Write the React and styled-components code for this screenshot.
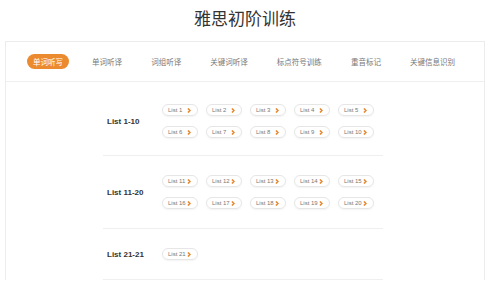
import React from 'react'
import styled, { createGlobalStyle } from 'styled-components'

const GlobalStyle = createGlobalStyle`
  body {
    margin: 0;
    background: #fff;
    font-family: "Liberation Sans", "Noto Sans CJK SC", Arial, sans-serif;
  }
`

const Page = styled.div`
  width: 480px;
  margin-left: 5px;
`

const Title = styled.h1`
  margin: 0 0 5px;
  height: 36px;
  line-height: 36px;
  text-align: center;
  font-size: 17px;
  font-weight: 400;
  color: #333;
  font-family: "Noto Sans CJK SC", sans-serif;
`

const Card = styled.div`
  border: 1px solid #ececec;
  border-bottom: none;
  background: #fff;
`

const TabBar = styled.div`
  height: 39px;
  display: flex;
  align-items: center;
  justify-content: space-between;
  padding: 0 23px 0 21px;
  border-bottom: 1px solid #efefef;
`

const Tab = styled.div`
  height: 15px;
  line-height: 15px;
  padding: 0 6px;
  border-radius: 8px;
  font-size: 7.5px;
  font-family: "Noto Sans CJK SC", sans-serif;
  color: ${props => props.active ? '#fff' : '#777'};
  background: ${props => props.active ? '#ec8a2f' : 'transparent'};
  white-space: nowrap;
`

const Content = styled.div`
  width: 280px;
  margin-left: 97px;
`

const Section = styled.div`
  display: flex;
  align-items: center;
  padding: ${props => props.first ? '22px 0 17px' : '19px 0'};
  border-bottom: 1px solid #efefef;
`

const Label = styled.div`
  width: 55px;
  padding-left: 4px;
  font-size: 8px;
  font-weight: 700;
  color: #333;
`

const Buttons = styled.div`
  display: grid;
  grid-template-columns: repeat(5, 36px);
  column-gap: 8px;
  row-gap: 10px;
`

const ListButton = styled.div`
  box-sizing: border-box;
  width: 36px;
  height: 12px;
  display: flex;
  align-items: center;
  justify-content: space-between;
  padding: 0 6px 0 5px;
  border: 1px solid #e6e6e6;
  border-radius: 7px;
  box-shadow: 0 1px 2px rgba(0, 0, 0, 0.05);
  font-size: 6px;
  color: #777;
  white-space: nowrap;
`

const Chevron = () => (
  <svg width="4" height="5" viewBox="0 0 4 5">
    <path d="M0.9 0.5 L3 2.5 L0.9 4.5" fill="none" stroke="#e8862c" strokeWidth="1.5" />
  </svg>
)

const tabs = ['单词听写', '单词听译', '词组听译', '关键词听译', '标点符号训练', '重音标记', '关键信息识别']

const groups = [
  { label: 'List 1-10', from: 1, to: 10 },
  { label: 'List 11-20', from: 11, to: 20 },
  { label: 'List 21-21', from: 21, to: 21 },
]

const App = () => {
  return (
    <Page>
      <GlobalStyle />
      <Title>雅思初阶训练</Title>
      <Card>
        <TabBar>
          {tabs.map((t, i) => (
            <Tab key={t} active={i === 0}>{t}</Tab>
          ))}
        </TabBar>
        <Content>
          {groups.map((g, gi) => (
            <Section key={g.label} first={gi === 0}>
              <Label>{g.label}</Label>
              <Buttons>
                {Array.from({ length: g.to - g.from + 1 }, (_, i) => g.from + i).map(n => (
                  <ListButton key={n}>
                    <span>List {n}</span>
                    <Chevron />
                  </ListButton>
                ))}
              </Buttons>
            </Section>
          ))}
        </Content>
      </Card>
    </Page>
  )
}

export default App
